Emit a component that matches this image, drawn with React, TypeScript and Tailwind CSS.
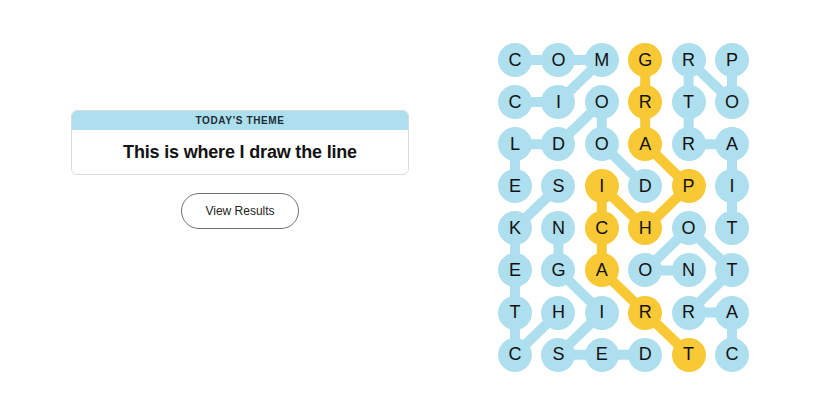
import { Fragment } from "react";

// Strands board: 6 columns x 8 rows
const LETTERS = [
  "COMGRP",
  "CIORTO",
  "LDOARA",
  "ESIDPI",
  "KNCHOT",
  "EGAONT",
  "THIRRA",
  "CSEDTC",
];

const COL_STEP = 43.4;
const ROW_STEP = 42.1;
const CELL = 34;

type Cell = [number, number];

const WORDS: Cell[][] = [
  // PORTRAIT
  [[0, 5], [1, 5], [0, 4], [1, 4], [2, 4], [2, 5], [3, 5], [4, 5]],
  // COMIC
  [[0, 0], [0, 1], [0, 2], [1, 1], [1, 0]],
  // DOODLE
  [[3, 3], [2, 2], [1, 2], [2, 1], [2, 0], [3, 0]],
  // SKETCH
  [[3, 1], [4, 0], [5, 0], [6, 0], [7, 0], [6, 1]],
  // DESIGN
  [[7, 3], [7, 2], [7, 1], [6, 2], [5, 1], [4, 1]],
  // CARTOON
  [[7, 5], [6, 5], [6, 4], [5, 5], [4, 4], [5, 3], [5, 4]],
];

// GRAPHIC ART
const SPANGRAM: Cell[] = [
  [0, 3], [1, 3], [2, 3], [3, 4], [4, 3], [3, 2], [4, 2], [5, 2], [6, 3], [7, 4],
];

const spanSet = new Set(SPANGRAM.map(([r, c]) => `${r}-${c}`));

function toPoints(cells: Cell[]) {
  return cells
    .map(([r, c]) => `${CELL / 2 + c * COL_STEP},${CELL / 2 + r * ROW_STEP}`)
    .join(" ");
}

function Board() {
  const w = 5 * COL_STEP + CELL;
  const h = 7 * ROW_STEP + CELL;
  return (
    <div className="relative" style={{ width: w, height: h }}>
      <svg className="absolute inset-0" width={w} height={h}>
        {WORDS.map((word, i) => (
          <polyline
            key={i}
            points={toPoints(word)}
            fill="none"
            stroke="#aedfee"
            strokeWidth={10}
            strokeLinejoin="round"
            strokeLinecap="round"
          />
        ))}
        <polyline
          points={toPoints(SPANGRAM)}
          fill="none"
          stroke="#f8c935"
          strokeWidth={10}
          strokeLinejoin="round"
          strokeLinecap="round"
        />
      </svg>
      <div className="relative grid grid-cols-[repeat(6,34px)] gap-x-[9.4px] gap-y-[8.1px]">
        {LETTERS.map((row, r) => (
          <Fragment key={r}>
            {row.split("").map((ch, c) => (
              <div
                key={c}
                className={`w-[34px] h-[34px] rounded-full flex items-center justify-center text-[18px] text-[#121212] ${
                  spanSet.has(`${r}-${c}`) ? "bg-[#f8c935]" : "bg-[#aedfee]"
                }`}
              >
                {ch}
              </div>
            ))}
          </Fragment>
        ))}
      </div>
    </div>
  );
}

export default function App() {
  return (
    <div
      className="flex h-[413px] w-[825px] bg-white text-[#121212]"
      style={{ fontFamily: '"Liberation Sans", Arial, sans-serif' }}
    >
      {/* Theme card + results */}
      <div className="ml-[71px] mt-[110px] w-[338px] flex flex-col items-center">
        <div className="w-full rounded-md border border-[#dcdcdc] overflow-hidden">
          <div className="h-[19px] bg-[#aedfee] flex items-center justify-center text-[10px] font-bold tracking-[0.06em] text-[#1d2b33]">
            TODAY&rsquo;S THEME
          </div>
          <div className="h-[44px] flex items-center justify-center text-[18px] font-bold tracking-[-0.01em]">
            This is where I draw the line
          </div>
        </div>
        <button className="mt-[18px] w-[118px] h-[36px] rounded-full border border-[#6f6f6f] text-[12px] text-[#222]">
          View Results
        </button>
      </div>

      {/* Board */}
      <div className="ml-[89px] mt-[43px]">
        <Board />
      </div>
    </div>
  );
}
